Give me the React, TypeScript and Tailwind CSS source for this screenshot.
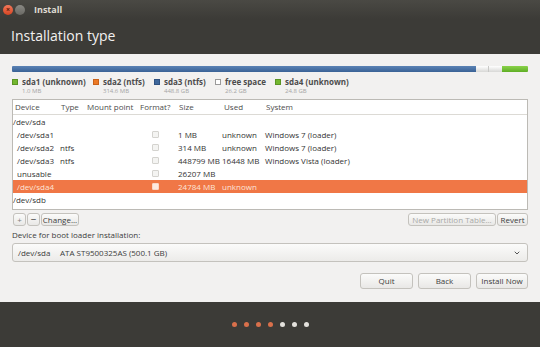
import { ChevronDown } from "lucide-react"

const legend = [
  { name: "sda1 (unknown)", size: "1.0 MB", color: "bg-[#73b72f]", border: "border-[#5a9424]", w: "w-[81px]" },
  { name: "sda2 (ntfs)", size: "314.6 MB", color: "bg-[#ec7a26]", border: "border-[#c9621a]", w: "w-[61px]" },
  { name: "sda3 (ntfs)", size: "448.8 GB", color: "bg-[#3e679b]", border: "border-[#2f5282]", w: "w-[61px]" },
  { name: "free space", size: "26.2 GB", color: "bg-white", border: "border-[#9a9a9a]", w: "w-[60px]" },
  { name: "sda4 (unknown)", size: "24.8 GB", color: "bg-[#73b72f]", border: "border-[#5a9424]", w: "w-[80px]" },
]

type Row = {
  device: string
  type?: string
  check?: boolean
  size?: string
  used?: string
  system?: string
  top?: boolean
  selected?: boolean
}

const rows: Row[] = [
  { device: "/dev/sda", top: true },
  { device: "/dev/sda1", check: true, size: "1 MB", used: "unknown", system: "Windows 7 (loader)" },
  { device: "/dev/sda2", type: "ntfs", check: true, size: "314 MB", used: "unknown", system: "Windows 7 (loader)" },
  { device: "/dev/sda3", type: "ntfs", check: true, size: "448799 MB", used: "16448 MB", system: "Windows Vista (loader)" },
  { device: "unusable", check: true, size: "26207 MB" },
  { device: "/dev/sda4", check: true, size: "24784 MB", used: "unknown", selected: true },
  { device: "/dev/sdb", top: true },
]

function Btn({ children, className = "" }: { children: React.ReactNode; className?: string }) {
  return (
    <div
      className={`flex items-center justify-center rounded-[3px] border border-[#c4c2bd] bg-gradient-to-b from-[#fbfbfa] to-[#e9e8e6] text-[8px] text-[#3c3c3c] ${className}`}
    >
      {children}
    </div>
  )
}

export default function App() {
  return (
    <div
      className="flex h-[347px] w-[540px] flex-col overflow-hidden bg-[#3c3b37]"
      style={{ fontFamily: '"Open Sans", "DejaVu Sans", sans-serif' }}
    >
      {/* Title bar */}
      <div className="flex h-[19px] items-center bg-gradient-to-b from-[#4a4944] to-[#3c3b37] pl-[3px]">
        <div className="flex h-[10px] w-[10px] items-center justify-center rounded-full bg-gradient-to-b from-[#f3785a] to-[#d64420] text-[7px] leading-none font-bold text-[#5a1a0a]">
          ×
        </div>
        <div className="ml-[2px] h-[10px] w-[10px] rounded-full bg-gradient-to-b from-[#8a8984] to-[#6a6964]" />
        <span className="ml-[9px] text-[9px] font-bold text-[#dfdbd2]">Install</span>
      </div>

      {/* Header */}
      <div className="flex h-[35px] items-center bg-[#3c3b37] pb-[2px] pl-[11px]">
        <span className="text-[14px] text-[#f2f1f0]">Installation type</span>
      </div>

      {/* Content */}
      <div className="flex h-[248px] flex-col bg-[#f2f1f0] px-[12px] pt-[12px]">
        {/* Partition bar */}
        <div className="flex h-[6px] w-full overflow-hidden rounded-[1px]">
          <div className="w-[464px] bg-gradient-to-b from-[#5a82b4] to-[#3a6296]" />
          <div className="flex w-[26px] bg-gradient-to-b from-[#ffffff] to-[#d8d8d6]">
            <div className="w-[13px] border-r border-[#c8c8c6]" />
          </div>
          <div className="flex-1 bg-gradient-to-b from-[#8ad24a] to-[#5fae24]" />
        </div>

        {/* Legend */}
        <div className="mt-[4px] flex">
          {legend.map((l) => (
            <div key={l.name} className={`${l.w} flex flex-col`}>
              <div className="flex items-center">
                <div className={`h-[6px] w-[6px] border ${l.border} ${l.color}`} />
                <span className="ml-[4px] text-[8px] leading-[11px] font-bold whitespace-nowrap text-[#4c4c4c]">
                  {l.name}
                </span>
              </div>
              <span className="ml-[10px] text-[6px] leading-[8px] text-[#a5a5a5]">{l.size}</span>
            </div>
          ))}
        </div>

        {/* Table */}
        <div className="mt-[4px] flex h-[111px] flex-col border border-[#bcbab5] bg-white">
          <div className="flex h-[15px] items-center border-b border-[#dcdad5] text-[8px] text-[#4c4c4c]">
            <span className="w-[48px] pl-[2px]">Device</span>
            <span className="w-[26px]">Type</span>
            <span className="w-[53px]">Mount point</span>
            <span className="w-[39px]">Format?</span>
            <span className="w-[45px]">Size</span>
            <span className="w-[42px]">Used</span>
            <span>System</span>
          </div>
          {rows.map((r) => (
            <div
              key={r.device}
              className={`flex h-[13px] items-center text-[8px] ${
                r.selected ? "bg-[#f07746] text-[#fde4d8]" : "text-[#333333]"
              }`}
            >
              {r.top ? (
                <span>{r.device}</span>
              ) : (
                <>
                  <span className="w-[47px] pl-[4px]">{r.device}</span>
                  <span className="w-[92px]">{r.type}</span>
                  <span className="w-[26px]">
                    {r.check && (
                      <span
                        className={`block h-[7px] w-[7px] rounded-[1px] border ${
                          r.selected ? "border-[#fbd6c6] bg-[#fde9e0]" : "border-[#d4d3cf] bg-[#f4f4f2]"
                        }`}
                      />
                    )}
                  </span>
                  <span className="w-[44px] whitespace-nowrap">{r.size}</span>
                  <span className="w-[43px] whitespace-nowrap">{r.used}</span>
                  <span className="whitespace-nowrap">{r.system}</span>
                </>
              )}
            </div>
          ))}
        </div>

        {/* Buttons under table */}
        <div className="mt-[3px] flex h-[13px] items-stretch">
          <Btn className="ml-[1px] w-[13px] text-[#808080]">+</Btn>
          <Btn className="ml-[1px] w-[13px] text-[10px]">−</Btn>
          <Btn className="ml-[1px] w-[38px]">Change...</Btn>
          <div className="flex-1" />
          <Btn className="w-[88px] text-[#a8a8a6]">New Partition Table...</Btn>
          <Btn className="ml-[1px] w-[31px]">Revert</Btn>
        </div>

        <div className="mt-[3px] text-[8px] leading-[11px] text-[#3c3c3c]">Device for boot loader installation:</div>

        <div className="mt-[3px] flex h-[19px] items-center rounded-[3px] border border-[#c4c2bd] bg-gradient-to-b from-[#fbfbfa] to-[#ecebe9] pl-[5px] pr-[6px] text-[8px] text-[#3c3c3c]">
          <span className="w-[42px]">/dev/sda</span>
          <span>ATA ST9500325AS (500.1 GB)</span>
          <div className="flex-1" />
          <ChevronDown className="h-[8px] w-[8px] text-[#555]" strokeWidth={3} />
        </div>

        <div className="mt-[11px] flex h-[16px] justify-end gap-[5px]">
          <Btn className="w-[53px]">Quit</Btn>
          <Btn className="w-[53px]">Back</Btn>
          <Btn className="w-[52px] border-[#8c8a85]">Install Now</Btn>
        </div>
      </div>

      {/* Footer dots */}
      <div className="flex flex-1 items-center justify-center gap-[7px] pb-[1px]">
        {[0, 1, 2, 3].map((i) => (
          <div key={i} className="h-[5px] w-[5px] rounded-full bg-[#d9704b]" />
        ))}
        {[0, 1, 2].map((i) => (
          <div key={i} className="h-[5px] w-[5px] rounded-full bg-[#e3e1dc]" />
        ))}
      </div>
    </div>
  )
}
